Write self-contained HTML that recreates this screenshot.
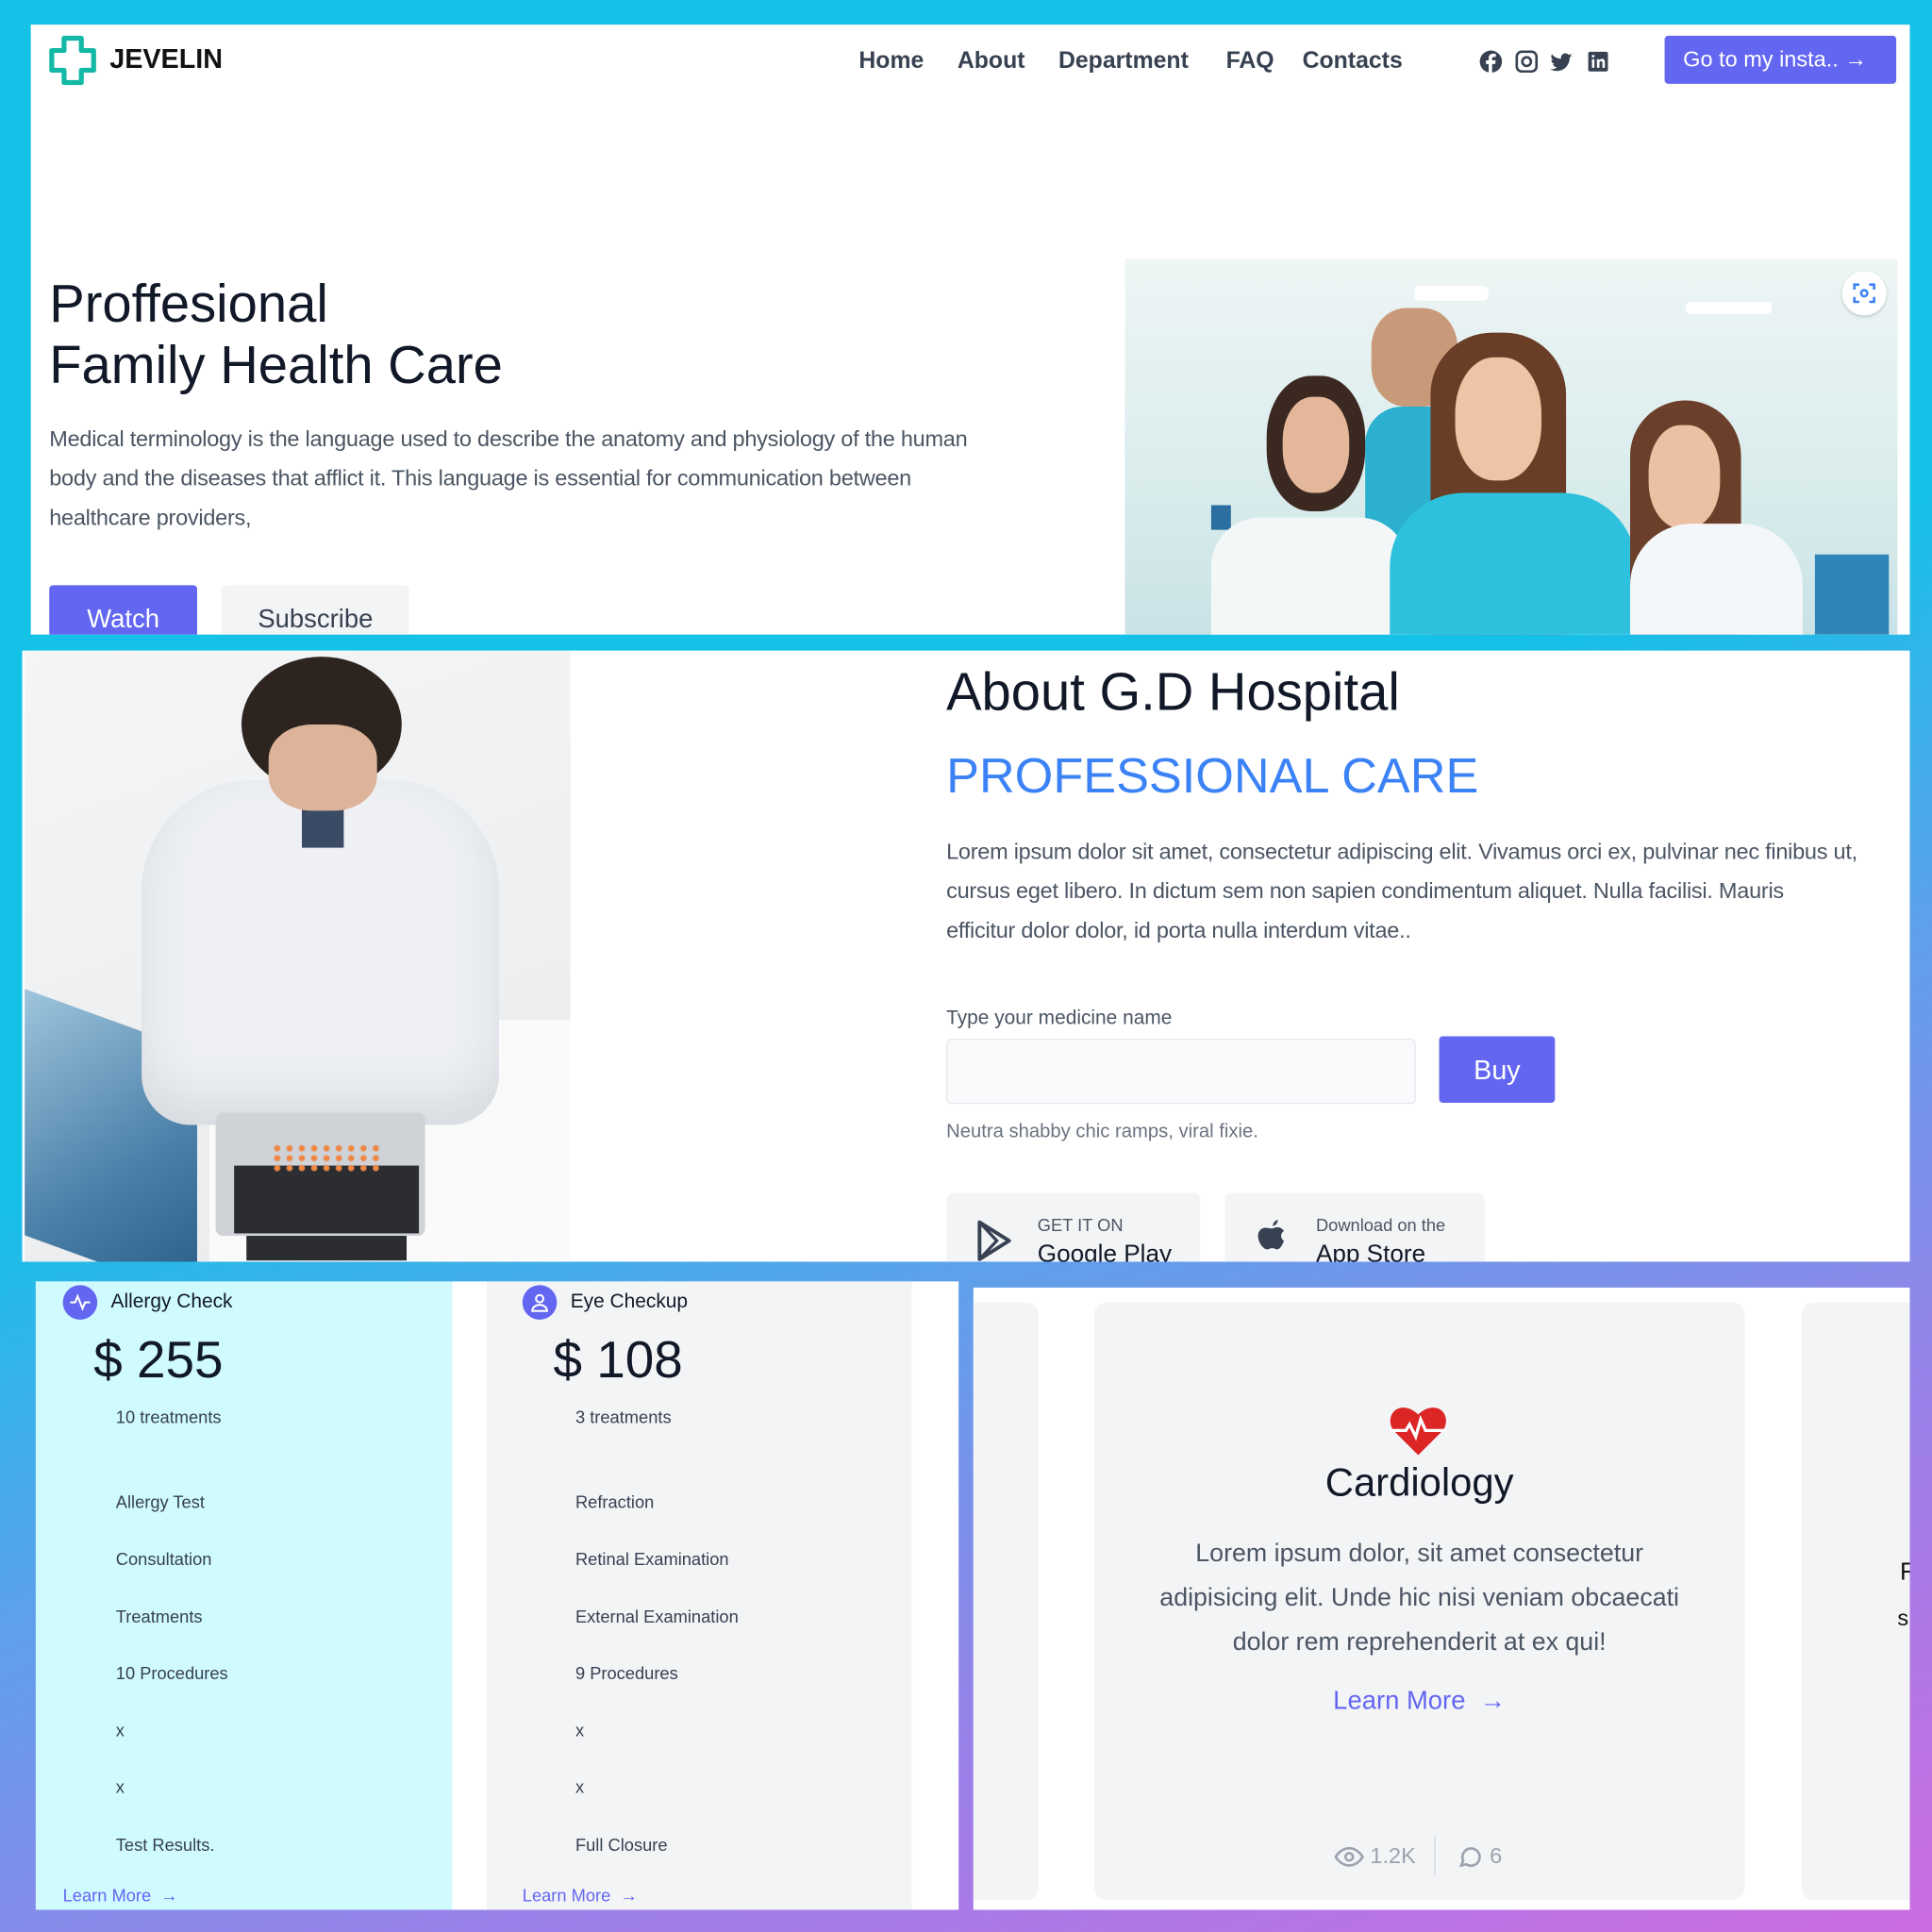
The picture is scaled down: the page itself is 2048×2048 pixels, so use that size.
<!DOCTYPE html>
<html><head><meta charset="utf-8"><style>
*{margin:0;padding:0;box-sizing:border-box}
html,body{width:2048px;height:2048px;overflow:hidden}
body{font-family:"Liberation Sans",sans-serif;background:#14c2e8;position:relative}
#w{position:absolute;left:0;top:0;width:1568px;height:1568px;transform:scale(1.306122);transform-origin:0 0}
.a{position:absolute}
.bg2{left:0;top:0;width:1568px;height:1568px;background:linear-gradient(160deg,rgba(20,194,232,0) 0%,rgba(20,194,232,0) 45%,#5fa0ea 62%,#9a80e8 80%,#cc6ce0 100%)}
.nav{font-size:19px;font-weight:bold;color:#374151}
.p{color:#4b5563;font-size:18px;line-height:32px;letter-spacing:-.2px}
.h{color:#111827}
.li{font-size:14px;color:#374151}
</style></head><body><div id="w">
<div class="a bg2"></div>

<!-- top panel -->
<div class="a" style="left:25px;top:20px;width:1525px;height:495px;background:#fff;overflow:hidden">
 <svg class="a" style="left:14px;top:8px" width="40" height="42" viewBox="0 0 40 42"><path d="M13 3h14v10h10v16H27v10H13V29H3V13h10z" fill="none" stroke="#14b8a6" stroke-width="4" stroke-linejoin="round"/><path d="M18 10h4" stroke="#fff" stroke-width="3"/></svg>
 <div class="a" style="left:64px;top:15px;font-size:22px;font-weight:900;color:#111">JEVELIN</div>
 <div class="a nav" style="left:672px;top:19px">Home</div>
 <div class="a nav" style="left:752px;top:19px">About</div>
 <div class="a nav" style="left:834px;top:19px">Department</div>
 <div class="a nav" style="left:970px;top:19px">FAQ</div>
 <div class="a nav" style="left:1032px;top:19px">Contacts</div>
 <svg class="a" style="left:1175px;top:20px" width="110" height="20" viewBox="0 0 110 20" fill="#374151">
  <circle cx="10" cy="10" r="9"/><path d="M11 19v-7h2.5l.4-3H11V7.5c0-.8.3-1.3 1.4-1.3H14V3.6c-.3 0-1.2-.1-2.2-.1-2.2 0-3.6 1.3-3.6 3.7V9H6v3h2.2v7z" fill="#fff"/>
  <rect x="31" y="2" width="16" height="16" rx="4" fill="none" stroke="#374151" stroke-width="2"/><circle cx="39" cy="10" r="3.5" fill="none" stroke="#374151" stroke-width="2"/>
  <path d="M76 5c-.7.3-1.4.5-2.1.6.8-.5 1.3-1.2 1.6-2-.7.4-1.5.7-2.3.9a3.6 3.6 0 0 0-6.2 3.3c-3-.2-5.7-1.6-7.5-3.8-1 1.7-.5 3.8 1.1 4.8-.6 0-1.2-.2-1.6-.4 0 1.8 1.2 3.3 2.9 3.6-.5.1-1.1.2-1.6.1.5 1.5 1.9 2.5 3.4 2.5A7.3 7.3 0 0 1 58 16c1.6 1 3.5 1.6 5.5 1.6 6.7 0 10.4-5.6 10.4-10.4v-.5c.8-.5 1.4-1.1 2.1-1.7z"/>
  <rect x="89" y="2" width="16" height="16" rx="1.5"/><path d="M92 8h2v7h-2zM96 8h2v1c.5-.8 1.3-1.2 2.2-1.2 1.6 0 2.3 1 2.3 2.8V15h-2v-4c0-.9-.3-1.4-1-1.4s-1.4.5-1.4 1.5V15h-2z M93 4.5a1.1 1.1 0 1 1 0 2.2 1.1 1.1 0 0 1 0-2.2" fill="#fff"/>
 </svg>
 <div class="a" style="left:1326px;top:9px;width:188px;height:39px;background:#6366f1;border-radius:3px;color:#fff;font-size:18px;line-height:39px;padding-left:15px">Go to my insta.. &#8594;</div>
 <div class="a h" style="left:15px;top:202px;font-size:43px;line-height:50px;font-weight:500">Proffesional<br>Family Health Care</div>
 <div class="a p" style="left:15px;top:320px;width:760px">Medical terminology is the language used to describe the anatomy and physiology of the human body and the diseases that afflict it. This language is essential for communication between healthcare providers,</div>
 <div class="a" style="left:15px;top:455px;width:120px;height:50px;background:#6366f1;border-radius:3px;color:#fff;font-size:21px;text-align:center;line-height:56px">Watch</div>
 <div class="a" style="left:155px;top:455px;width:152px;height:50px;background:#f3f4f6;border-radius:3px;color:#374151;font-size:21px;text-align:center;line-height:56px">Subscribe</div>
 <!-- photo -->
 <div class="a" style="left:888px;top:190px;width:627px;height:310px;background:linear-gradient(180deg,#eef5f5,#d9ecec 60%,#c9e2e6);overflow:hidden">
  <div class="a" style="left:235px;top:22px;width:60px;height:12px;background:#fff;border-radius:4px"></div>
  <div class="a" style="left:455px;top:35px;width:70px;height:10px;background:#fff;border-radius:4px"></div>
  <div class="a" style="left:70px;top:200px;width:16px;height:20px;background:#2a6fa0"></div>
  <div class="a" style="left:560px;top:240px;width:60px;height:70px;background:#2f85b8"></div>
  <div class="a" style="left:200px;top:40px;width:70px;height:80px;border-radius:40%;background:#c99a7a"></div>
  <div class="a" style="left:195px;top:120px;width:90px;height:200px;background:#2bb0d0;border-radius:30px 30px 0 0"></div>
  <div class="a" style="left:115px;top:95px;width:80px;height:110px;border-radius:45%;background:#3b2820"></div>
  <div class="a" style="left:128px;top:112px;width:54px;height:78px;border-radius:45%;background:#e4b79a"></div>
  <div class="a" style="left:70px;top:210px;width:160px;height:110px;background:#f4f7f8;border-radius:40px 40px 0 0"></div>
  <div class="a" style="left:248px;top:60px;width:110px;height:260px;border-radius:50px 50px 0 0;background:#6a3e26"></div>
  <div class="a" style="left:268px;top:80px;width:70px;height:100px;border-radius:45%;background:#efc3a5"></div>
  <div class="a" style="left:215px;top:190px;width:200px;height:130px;background:#2ec1dd;border-radius:60px 60px 0 0"></div>
  <div class="a" style="left:410px;top:115px;width:90px;height:200px;border-radius:45px 45px 0 0;background:#6b3f2a"></div>
  <div class="a" style="left:425px;top:135px;width:58px;height:84px;border-radius:45%;background:#ecc0a2"></div>
  <div class="a" style="left:410px;top:215px;width:140px;height:110px;background:#f4f7f9;border-radius:50px 50px 0 0"></div>
  <div class="a" style="left:582px;top:10px;width:36px;height:36px;border-radius:50%;background:#fff;box-shadow:0 1px 3px rgba(0,0,0,.2)"></div>
  <svg class="a" style="left:590px;top:18px" width="20" height="20" viewBox="0 0 20 20" fill="none" stroke="#3b82f6" stroke-width="2"><path d="M2 7V3h4M14 3h4v4M18 13v4h-4M6 17H2v-4"/><circle cx="10" cy="10" r="2.5"/></svg>
 </div>
</div>

<!-- second panel -->
<div class="a" style="left:18px;top:528px;width:1532px;height:496px;background:#fff;overflow:hidden">
 <div class="a" style="left:2px;top:0;width:443px;height:496px;background:linear-gradient(160deg,#f4f5f6,#e9ebed);overflow:hidden">
  <div class="a" style="left:0;top:300px;width:140px;height:200px;background:linear-gradient(135deg,#9ec5dd,#4a7fa8 60%,#2a5c85);transform:skewY(20deg)"></div>
  <div class="a" style="left:150px;top:300px;width:300px;height:200px;background:#fafafa"></div>
  <div class="a" style="left:95px;top:105px;width:290px;height:280px;background:#eef0f3;border-radius:90px 90px 40px 40px;box-shadow:inset 0 -20px 40px #d6dbe0"></div>
  <div class="a" style="left:225px;top:100px;width:34px;height:60px;background:#3b4b66"></div>
  <div class="a" style="left:176px;top:5px;width:130px;height:110px;border-radius:50%;background:#2d241f"></div>
  <div class="a" style="left:198px;top:60px;width:88px;height:70px;border-radius:40%;background:#ddb49a"></div>
  <div class="a" style="left:155px;top:375px;width:170px;height:100px;background:#cfd2d6;border-radius:6px"></div>
  <div class="a" style="left:170px;top:418px;width:150px;height:55px;background:#2b2d31"></div>
  <div class="a" style="left:200px;top:400px;width:90px;height:25px;background:radial-gradient(circle,#e84 2px,transparent 3px) 0 0/10px 8px"></div>
  <div class="a" style="left:180px;top:475px;width:130px;height:20px;background:#2b2d31"></div>
 </div>
 <div class="a h" style="left:750px;top:10px;font-size:43px;font-weight:500">About G.D Hospital</div>
 <div class="a" style="left:750px;top:80px;font-size:40px;font-weight:500;color:#3b82f6">PROFESSIONAL CARE</div>
 <div class="a p" style="left:750px;top:147px;width:740px">Lorem ipsum dolor sit amet, consectetur adipiscing elit. Vivamus orci ex, pulvinar nec finibus ut, cursus eget libero. In dictum sem non sapien condimentum aliquet. Nulla facilisi. Mauris efficitur dolor dolor, id porta nulla interdum vitae..</div>
 <div class="a" style="left:750px;top:290px;font-size:16px;color:#4b5563">Type your medicine name</div>
 <div class="a" style="left:750px;top:315px;width:381px;height:53px;background:#f9fafb;border:1px solid #e5e7eb;border-radius:4px"></div>
 <div class="a" style="left:1150px;top:313px;width:94px;height:54px;background:#6366f1;border-radius:3px;color:#fff;font-size:22px;text-align:center;line-height:56px">Buy</div>
 <div class="a" style="left:750px;top:382px;font-size:15.5px;color:#6b7280">Neutra shabby chic ramps, viral fixie.</div>
 <div class="a" style="left:750px;top:440px;width:206px;height:70px;background:#f3f4f6;border-radius:6px"></div>
 <svg class="a" style="left:774px;top:462px" width="30" height="34" viewBox="0 0 30 34"><path d="M3 2l24 15L3 32z" fill="none" stroke="#374151" stroke-width="3" stroke-linejoin="round"/><path d="M3 2l14 15L3 32" fill="none" stroke="#374151" stroke-width="2.5"/></svg>
 <div class="a" style="left:824px;top:458px;font-size:14px;color:#4b5563">GET IT ON</div>
 <div class="a" style="left:824px;top:479px;font-size:20px;color:#111827">Google Play</div>
 <div class="a" style="left:976px;top:440px;width:211px;height:70px;background:#f3f4f6;border-radius:6px"></div>
 <svg class="a" style="left:1000px;top:460px" width="28" height="34" viewBox="0 0 28 34" fill="#374151"><path d="M14 9c2-0 3-1 4.5-1 3 0 5 2 5.5 3-3 2-3 6 0 8-1 3-3 7-5.5 7-1.5 0-2-1-4-1s-2.5 1-4 1C7 26 3 20 3 15c0-4 3-6.5 6-6.5 2 0 3 .5 5 .5z"/><path d="M15 7c0-2.5 2-4.5 4-5 .2 2.5-1.8 4.8-4 5z"/></svg>
 <div class="a" style="left:1050px;top:458px;font-size:14px;color:#4b5563">Download on the</div>
 <div class="a" style="left:1050px;top:479px;font-size:20px;color:#111827">App Store</div>
</div>

<!-- bottom left -->
<div class="a" style="left:29px;top:1040px;width:749px;height:510px;background:#fff;overflow:hidden">
 <div class="a" style="left:0;top:0;width:338px;height:510px;background:#cffafe"></div>
 <div class="a" style="left:366px;top:0;width:345px;height:510px;background:#f3f4f6"></div>
 <div class="a" style="left:22px;top:3px;width:28px;height:28px;border-radius:50%;background:#6366f1"></div>
 <svg class="a" style="left:26px;top:7px" width="20" height="20" viewBox="0 0 20 20" fill="none" stroke="#fff" stroke-width="1.6"><path d="M2 10h4l2-5 4 10 2-5h4"/></svg>
 <div class="a" style="left:61px;top:8px;font-size:16px;color:#111827">Allergy Check</div>
 <div class="a" style="left:395px;top:3px;width:28px;height:28px;border-radius:50%;background:#6366f1"></div>
 <svg class="a" style="left:399px;top:7px" width="20" height="20" viewBox="0 0 20 20" fill="none" stroke="#fff" stroke-width="1.6"><circle cx="10" cy="7" r="3"/><path d="M4 17c0-3 3-5 6-5s6 2 6 5z"/></svg>
 <div class="a" style="left:434px;top:8px;font-size:16px;color:#111827">Eye Checkup</div>
 <div class="a h" style="left:47px;top:40px;font-size:42px">$ 255</div>
 <div class="a h" style="left:420px;top:40px;font-size:42px">$ 108</div>
 <div class="a li" style="left:65px;top:102px">10 treatments</div>
 <div class="a li" style="left:438px;top:102px">3 treatments</div>
 <div class="a li" style="left:65px;top:156px;line-height:46.3px">Allergy Test<br>Consultation<br>Treatments<br>10 Procedures<br>x<br>x<br>Test Results.</div>
 <div class="a li" style="left:438px;top:156px;line-height:46.3px">Refraction<br>Retinal Examination<br>External Examination<br>9 Procedures<br>x<br>x<br>Full Closure</div>
 <div class="a" style="left:22px;top:490px;font-size:14px;color:#6366f1">Learn More &nbsp;&#8594;</div>
 <div class="a" style="left:395px;top:490px;font-size:14px;color:#6366f1">Learn More &nbsp;&#8594;</div>
</div>

<!-- bottom right -->
<div class="a" style="left:790px;top:1045px;width:760px;height:505px;background:#fff;overflow:hidden">
 <div class="a" style="left:-10px;top:12px;width:63px;height:485px;background:#f3f4f6;border-radius:10px"></div>
 <div class="a" style="left:98px;top:12px;width:528px;height:485px;background:#f3f4f6;border-radius:10px"></div>
 <div class="a" style="left:672px;top:12px;width:120px;height:485px;background:#f3f4f6;border-radius:10px"></div>
 <div class="a" style="left:752px;top:220px;font-size:20px;color:#111">F</div>
 <div class="a" style="left:750px;top:258px;font-size:18px;color:#111">s</div>
 <svg class="a" style="left:337px;top:95px" width="48" height="42" viewBox="0 0 48 42"><path d="M24 41L5 22C0 17 0 8 6 4c5-3 12-2 18 4 6-6 13-7 18-4 6 4 6 13 1 18z" fill="#dc2626"/><path d="M2 21h12l3-5 5 10 4-14 4 9h16" fill="none" stroke="#fff" stroke-width="2.5"/></svg>
 <div class="a h" style="left:98px;width:528px;top:140px;text-align:center;font-size:32px;font-weight:500">Cardiology</div>
 <div class="a" style="left:140px;width:444px;top:198px;text-align:center;font-size:20.5px;line-height:36px;color:#4b5563">Lorem ipsum dolor, sit amet consectetur adipisicing elit. Unde hic nisi veniam obcaecati dolor rem reprehenderit at ex qui!</div>
 <div class="a" style="left:98px;width:528px;top:324px;text-align:center;font-size:21px;color:#6366f1">Learn More &nbsp;&#8594;</div>
 <svg class="a" style="left:293px;top:453px" width="24" height="18" viewBox="0 0 24 18" fill="none" stroke="#9ca3af" stroke-width="2"><path d="M1 9s4-7 11-7 11 7 11 7-4 7-11 7S1 9 1 9z"/><circle cx="12" cy="9" r="3"/></svg>
 <div class="a" style="left:322px;top:451px;font-size:18px;color:#9ca3af">1.2K</div>
 <div class="a" style="left:374px;top:445px;width:1px;height:32px;background:#d1d5db"></div>
 <svg class="a" style="left:393px;top:452px" width="20" height="20" viewBox="0 0 20 20" fill="none" stroke="#9ca3af" stroke-width="2"><path d="M3 17l1.5-4A7 7 0 1 1 7 16z"/></svg>
 <div class="a" style="left:419px;top:451px;font-size:18px;color:#9ca3af">6</div>
</div>
</div></body></html>
